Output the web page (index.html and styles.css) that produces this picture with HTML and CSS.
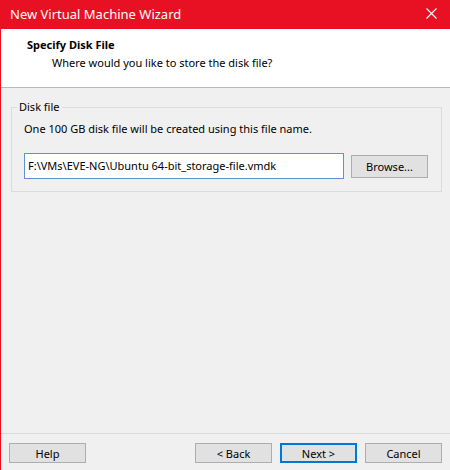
FILE: index.html
```html
<!DOCTYPE html>
<html>
<head>
<meta charset="utf-8">
<link rel="stylesheet" href="styles.css">
</head>
<body>
<div class="window">
  <div class="titlebar">
    <span class="title">New Virtual Machine Wizard</span>
    <svg class="close" width="11" height="11" viewBox="0 0 11 11"><path d="M0.5 0.5 L10.5 10.5 M10.5 0.5 L0.5 10.5" stroke="#fff" stroke-width="1.1" fill="none"/></svg>
  </div>
  <div class="header">
    <div class="h-title">Specify Disk File</div>
    <div class="h-sub">Where would you like to store the disk file?</div>
  </div>
  <div class="main">
    <fieldset class="group">
      <legend>Disk file</legend>
      <div class="desc">One 100 GB disk file will be created using this file name.</div>
      <div class="row">
        <div class="input">F:\VMs\EVE-NG\Ubuntu 64-bit_storage-file.vmdk</div>
        <div class="btn">Browse...</div>
      </div>
    </fieldset>
  </div>
  <div class="footer">
    <div class="btn">Help</div>
    <div class="spacer"></div>
    <div class="btn">&lt; Back</div>
    <div class="btn default">Next &gt;</div>
    <div class="btn">Cancel</div>
  </div>
</div>
</body>
</html>
```

FILE: styles.css
```css
* { box-sizing: border-box; }
html, body { margin: 0; padding: 0; }
body {
  width: 450px;
  height: 470px;
  overflow: hidden;
  font-family: "Noto Sans", "Liberation Sans", sans-serif;
  font-size: 11px;
  color: #000;
  background: #f0f0f0;
}
.window {
  height: 470px;
  display: flex;
  flex-direction: column;
  border-left: 1px solid #e81123;
}
.titlebar {
  height: 29px;
  flex: none;
  background: #e81123;
  display: flex;
  align-items: center;
  padding: 0 13px 0 9px;
}
.title {
  color: #fff;
  font-size: 13px;
  flex: 1;
  padding-bottom: 1px;
}
.close { display: block; margin-top: -2px; }
.header {
  flex: none;
  height: 59px;
  background: #fff;
  border-bottom: 1px solid #b9b9b9;
  padding: 8px 0 0 26px;
}
.h-title { font-weight: bold; line-height: 16px; }
.h-sub { line-height: 16px; margin-top: 2px; padding-left: 25px; }
.main {
  flex: 1;
  padding: 11px 8px 0 10px;
}
.group {
  margin: 0;
  border: 1px solid #dcdcdc;
  padding: 6px 12px 12px 12px;
}
.group legend {
  padding: 0 2px;
  margin-left: -7px;
  line-height: 16px;
}
.desc { line-height: 16px; }
.row {
  display: flex;
  gap: 7px;
  margin-top: 16px;
  align-items: center;
}
.input {
  width: 320px;
  height: 26px;
  background: #fff;
  border: 1px solid #5d93cf;
  padding: 0 3px;
  line-height: 24px;
  white-space: nowrap;
}
.btn {
  width: 77px;
  height: 23px;
  background: #e1e1e1;
  border: 1px solid #adadad;
  display: flex;
  align-items: center;
  justify-content: center;
}
.footer {
  flex: none;
  height: 37px;
  border-top: 1px solid #dadada;
  display: flex;
  padding: 9px 8px 0 8px;
  gap: 8px;
}
.footer .btn { height: 20px; }
.spacer { flex: 1; }
.btn.default { border: 1px solid #0078d7; box-shadow: inset 0 0 0 1px #0078d7; }
```
